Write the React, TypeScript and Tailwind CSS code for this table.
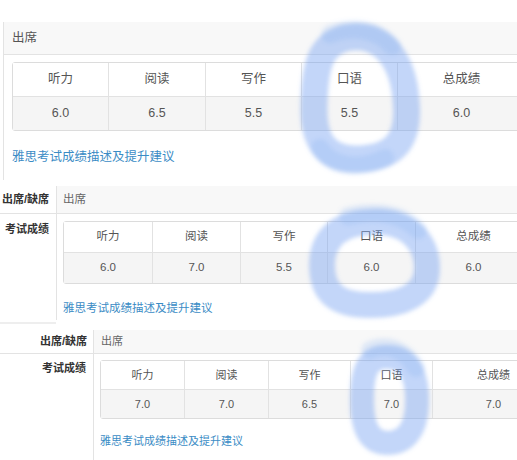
import React from "react";

const FONT = "font-['Liberation_Sans','Noto_Sans_CJK_SC',sans-serif]";

type TableProps = {
  widths: number[];
  headH: string;
  dataH: string;
  text: string;
  values: string[];
};

const HEADERS = ["听力", "阅读", "写作", "口语", "总成绩"];

function ScoreTable({ widths, headH, dataH, text, values }: TableProps) {
  return (
    <div className={`border border-[#dcdcdc] rounded-[3px] w-max ${text} text-[#555]`}>
      <div className={`flex ${headH} border-b border-[#e2e2e2] bg-white`}>
        {HEADERS.map((h, i) => (
          <div
            key={h}
            style={{ width: widths[i] }}
            className={`flex items-center justify-center shrink-0 ${i > 0 ? "border-l border-[#e2e2e2]" : ""}`}
          >
            {h}
          </div>
        ))}
      </div>
      <div className={`flex ${dataH} bg-[#f5f5f5]`}>
        {values.map((v, i) => (
          <div
            key={i}
            style={{ width: widths[i] }}
            className={`flex items-center justify-center shrink-0 ${i > 0 ? "border-l border-[#e2e2e2]" : ""}`}
          >
            {v}
          </div>
        ))}
      </div>
    </div>
  );
}

function Marks() {
  const c = "#6f9ef0";
  return (
    <svg
      className="absolute left-0 top-0 pointer-events-none"
      width={517}
      height={460}
      viewBox="0 0 517 460"
    >
      <defs>
        <filter id="soft" x="-20%" y="-20%" width="140%" height="140%">
          <feGaussianBlur stdDeviation="2.2" />
        </filter>
      </defs>
      <g filter="url(#soft)" fill="none" strokeLinecap="round" strokeLinejoin="round">
        {/* mark 1 */}
        <path
          d="M 345 38 C 382 30, 403 60, 406 100 C 410 140, 395 158, 358 159 C 325 160, 313 140, 314 105 C 315 65, 320 45, 345 38 Z"
          stroke={c}
          strokeOpacity={0.42}
          strokeWidth={27}
        />
        <path
          d="M 330 34 C 352 26, 376 28, 392 46 M 320 148 C 332 168, 360 170, 385 158"
          stroke={c}
          strokeOpacity={0.18}
          strokeWidth={18}
        />
        {/* mark 2 */}
        <path
          d="M 370 222 C 405 219, 427 240, 427 268 C 427 296, 400 305, 370 305 C 340 305, 322 295, 322 265 C 322 238, 340 223, 370 222 Z"
          stroke={c}
          strokeOpacity={0.42}
          strokeWidth={26}
        />
        <path
          d="M 348 216 C 372 210, 400 212, 418 230"
          stroke={c}
          strokeOpacity={0.18}
          strokeWidth={18}
        />
        {/* mark 3 */}
        <path
          d="M 384 357 C 412 355, 418 380, 417 405 C 416 430, 405 443, 388 443 C 368 443, 362 425, 362 400 C 362 372, 367 358, 384 357 Z"
          stroke={c}
          strokeOpacity={0.42}
          strokeWidth={24}
        />
        <path
          d="M 370 350 C 386 343, 404 348, 416 368"
          stroke={c}
          strokeOpacity={0.18}
          strokeWidth={18}
        />
      </g>
    </svg>
  );
}

export default function App() {
  return (
    <div className={`relative w-[517px] h-[460px] overflow-hidden bg-white ${FONT}`}>
      {/* Section 1 */}
      <div className="pt-[22px]">
        <div className="ml-[3px] border-l border-[#e3e3e3] h-[158px]">
          <div className="h-[33px] bg-[#f8f8f8] border-b border-[#e3e3e3] flex items-center pl-[8px] text-[12.5px] text-[#555]">
            出席
          </div>
          <div className="pl-[8px] pt-[7px]">
            <ScoreTable
              widths={[95, 97, 96, 96, 128]}
              headH="h-[34px]"
              dataH="h-[33px]"
              text="text-[12.5px]"
              values={["6.0", "6.5", "5.5", "5.5", "6.0"]}
            />
            <div className="mt-[17px] text-[12.5px] leading-[18px] text-[#3b8cc5]">
              雅思考试成绩描述及提升建议
            </div>
          </div>
        </div>
      </div>

      {/* Section 2 */}
      <div className="mt-[6px] flex flex-col">
        <div className="flex h-[28px] border-b border-[#e3e3e3]">
          <div className="w-[57px] shrink-0 border-r border-[#e3e3e3] flex items-center justify-end pr-[7px] text-[11px] font-bold text-[#333] whitespace-nowrap">
            出席/缺席
          </div>
          <div className="flex-1 bg-[#f8f8f8] flex items-center pl-[6px] text-[11.5px] text-[#666]">
            出席
          </div>
        </div>
        <div className="flex h-[106px]">
          <div className="w-[57px] shrink-0 border-r border-[#e3e3e3] flex justify-end pr-[7px] pt-[7px] text-[11px] leading-[16px] font-bold text-[#333] whitespace-nowrap">
            考试成绩
          </div>
          <div className="flex-1 pl-[6px] pt-[7px]">
            <ScoreTable
              widths={[88, 88, 87, 88, 116]}
              headH="h-[31px]"
              dataH="h-[30px]"
              text="text-[11.5px]"
              values={["6.0", "7.0", "5.5", "6.0", "6.0"]}
            />
            <div className="mt-[16px] text-[11.5px] leading-[16px] text-[#3b8cc5]">
              雅思考试成绩描述及提升建议
            </div>
          </div>
        </div>
      </div>

      {/* Section 3 */}
      <div className="mt-[2px] h-[2px] w-[56px] bg-[#eeeeee]" />
      <div className="mt-[6px] flex flex-col">
        <div className="flex h-[24px] border-b border-[#e3e3e3]">
          <div className="w-[94px] shrink-0 border-r border-[#e3e3e3] flex items-center justify-end pr-[6px] text-[11px] font-bold text-[#333] whitespace-nowrap">
            出席/缺席
          </div>
          <div className="flex-1 bg-[#f8f8f8] flex items-center pl-[7px] text-[11px] text-[#666]">
            出席
          </div>
        </div>
        <div className="flex h-[120px]">
          <div className="w-[94px] shrink-0 border-r border-[#e3e3e3] flex justify-end pr-[7px] pt-[7px] text-[11px] leading-[15px] font-bold text-[#333] whitespace-nowrap">
            考试成绩
          </div>
          <div className="flex-1 pl-[6px] pt-[6px]">
            <ScoreTable
              widths={[83, 84, 82, 82, 122]}
              headH="h-[29px]"
              dataH="h-[28px]"
              text="text-[11px]"
              values={["7.0", "7.0", "6.5", "7.0", "7.0"]}
            />
            <div className="mt-[15px] text-[11px] leading-[15px] text-[#3b8cc5]">
              雅思考试成绩描述及提升建议
            </div>
          </div>
        </div>
      </div>

      <Marks />
    </div>
  );
}
